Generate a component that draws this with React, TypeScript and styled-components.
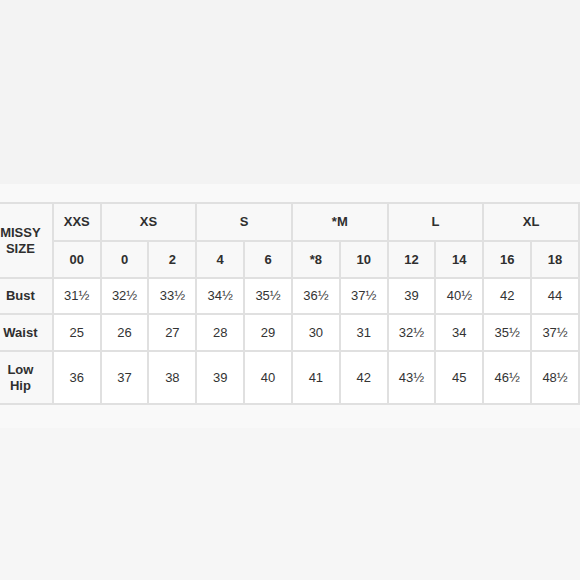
import styled, { createGlobalStyle } from "styled-components";

const Global = createGlobalStyle`
  html, body {
    margin: 0;
    padding: 0;
    background: #f6f6f6;
  }
  body {
    font-family: "Liberation Sans", Arial, sans-serif;
    overflow: hidden;
  }
`;

const Page = styled.div`
  width: 580px;
  height: 580px;
  overflow: hidden;
  display: flex;
  flex-direction: column;
`;

const TopArea = styled.div`
  height: 184px;
  background: #f3f3f3;
`;

const Band = styled.div`
  background: #f9f9f9;
  padding: 18px 0 23px;
`;

const Table = styled.table`
  margin-left: -13px;
  border-collapse: separate;
  border-spacing: 2px;
  background: #e0e0e0;
  table-layout: fixed;
`;

const Cell = styled.td<{ $w?: number; $h?: number; $head?: boolean }>`
  box-sizing: border-box;
  padding: 0;
  width: ${({ $w }) => ($w ? `${$w}px` : "auto")};
  height: ${({ $h }) => ($h ? `${$h}px` : "auto")};
  background: ${({ $head }) => ($head ? "#f8f8f8" : "#ffffff")};
  color: ${({ $head }) => ($head ? "#2f2f2f" : "#333333")};
  font-size: 13px;
  font-weight: ${({ $head }) => ($head ? 700 : 400)};
  line-height: 16px;
  text-align: center;
  vertical-align: middle;
`;

const sizes = [
  { label: "XXS", nums: ["00"] },
  { label: "XS", nums: ["0", "2"] },
  { label: "S", nums: ["4", "6"] },
  { label: "*M", nums: ["*8", "10"] },
  { label: "L", nums: ["12", "14"] },
  { label: "XL", nums: ["16", "18"] },
];

const rows = [
  { name: ["Bust"], h: 34, vals: ["31½", "32½", "33½", "34½", "35½", "36½", "37½", "39", "40½", "42", "44"] },
  { name: ["Waist"], h: 35, vals: ["25", "26", "27", "28", "29", "30", "31", "32½", "34", "35½", "37½"] },
  { name: ["Low", "Hip"], h: 51, vals: ["36", "37", "38", "39", "40", "41", "42", "43½", "45", "46½", "48½"] },
];

export default function App() {
  return (
    <Page>
      <Global />
      <TopArea />
      <Band>
        <Table>
          <tbody>
            <tr>
              <Cell as="th" $head $w={63} rowSpan={2}>
                MISSY
                <br />
                SIZE
              </Cell>
              {sizes.map((s) => (
                <Cell as="th" $head $h={36} key={s.label} colSpan={s.nums.length}>
                  {s.label}
                </Cell>
              ))}
            </tr>
            <tr>
              {sizes.flatMap((s) =>
                s.nums.map((n) => (
                  <Cell as="th" $head $w={46} $h={35} key={n}>
                    {n}
                  </Cell>
                ))
              )}
            </tr>
            {rows.map((r) => (
              <tr key={r.name.join(" ")}>
                <Cell as="th" $head $h={r.h}>
                  {r.name.map((line, i) => (
                    <span key={line}>
                      {i > 0 && <br />}
                      {line}
                    </span>
                  ))}
                </Cell>
                {r.vals.map((v, i) => (
                  <Cell key={i}>{v}</Cell>
                ))}
              </tr>
            ))}
          </tbody>
        </Table>
      </Band>
    </Page>
  );
}
